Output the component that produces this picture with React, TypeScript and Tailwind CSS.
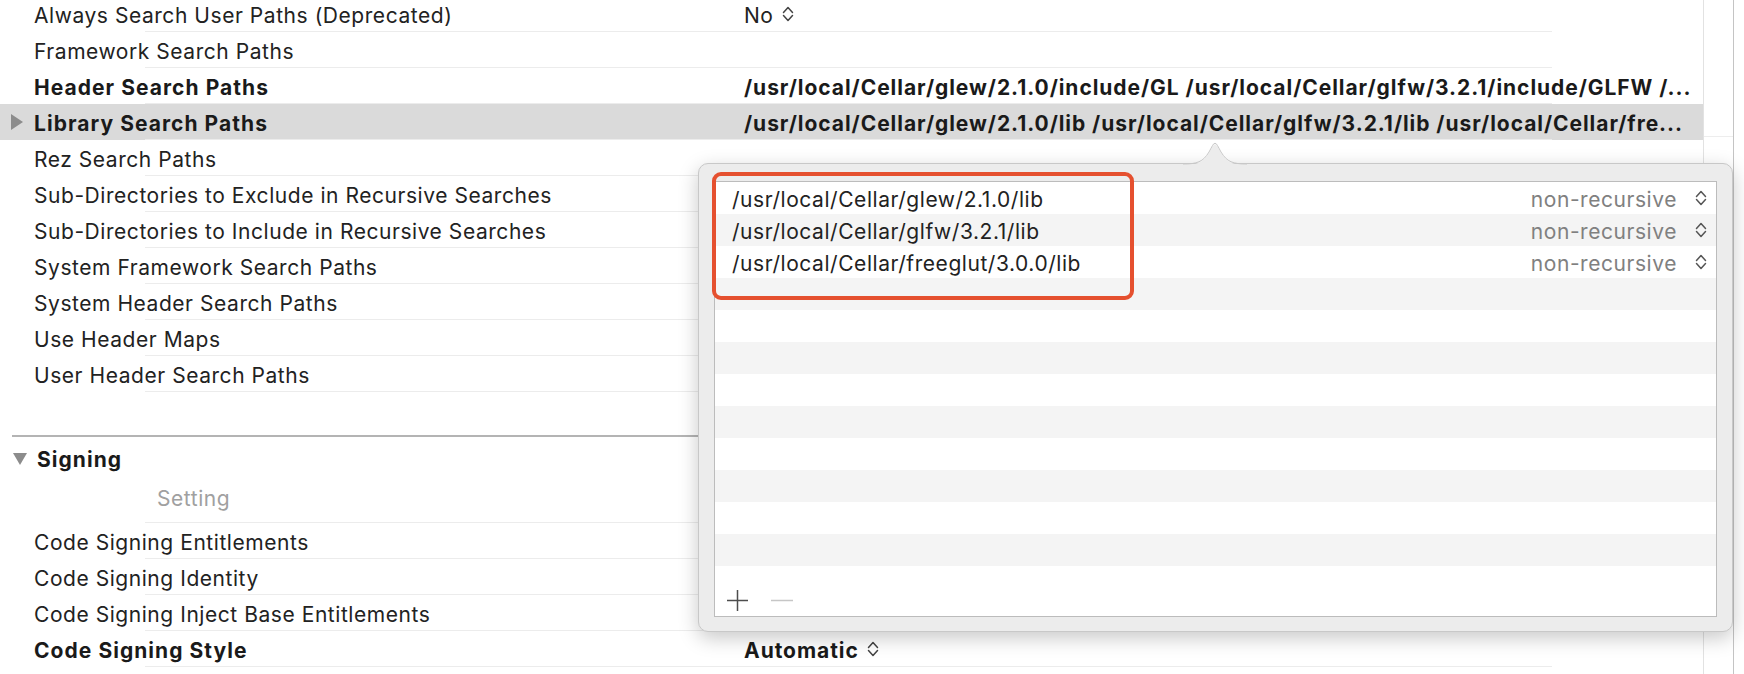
import React from 'react';

type Row = {
  label: string;
  value?: string;
  bold?: boolean;
  boldValue?: boolean;
  chevron?: boolean;
  selected?: boolean;
};

const searchRows: Row[] = [
  { label: 'Always Search User Paths (Deprecated)', value: 'No', chevron: true },
  { label: 'Framework Search Paths' },
  {
    label: 'Header Search Paths',
    bold: true,
    boldValue: true,
    value: '/usr/local/Cellar/glew/2.1.0/include/GL /usr/local/Cellar/glfw/3.2.1/include/GLFW /...',
  },
  {
    label: 'Library Search Paths',
    bold: true,
    boldValue: true,
    selected: true,
    value: '/usr/local/Cellar/glew/2.1.0/lib /usr/local/Cellar/glfw/3.2.1/lib /usr/local/Cellar/fre...',
  },
  { label: 'Rez Search Paths' },
  { label: 'Sub-Directories to Exclude in Recursive Searches' },
  { label: 'Sub-Directories to Include in Recursive Searches' },
  { label: 'System Framework Search Paths' },
  { label: 'System Header Search Paths' },
  { label: 'Use Header Maps' },
  { label: 'User Header Search Paths' },
];

const signingRows: Row[] = [
  { label: 'Code Signing Entitlements' },
  { label: 'Code Signing Identity' },
  { label: 'Code Signing Inject Base Entitlements' },
  { label: 'Code Signing Style', bold: true, boldValue: true, value: 'Automatic', chevron: true },
];

const paths = [
  '/usr/local/Cellar/glew/2.1.0/lib',
  '/usr/local/Cellar/glfw/3.2.1/lib',
  '/usr/local/Cellar/freeglut/3.0.0/lib',
];

const UpDown: React.FC<{ className?: string }> = ({ className }) => (
  <svg viewBox="0 0 12 18" className={className} fill="none" stroke="currentColor" strokeWidth={1.5} strokeLinecap="round" strokeLinejoin="round">
    <path d="M1.5 7.5 6 2.5 10.5 7.5" />
    <path d="M1.5 10.5 6 15.5 10.5 10.5" />
  </svg>
);

const SettingRow: React.FC<{ row: Row }> = ({ row }) => (
  <div className={`flex flex-col ${row.selected ? 'bg-[#dadada]' : ''}`}>
    <div className="h-[35px] pt-[3px] flex items-center">
      <div className="w-[744px] shrink-0 flex items-center">
        <div className="w-[34px] pl-[11px] flex items-center">
          {row.selected && (
            <svg viewBox="0 0 12 16" className="w-[12px] h-[16px] -mt-[2px]">
              <polygon points="0,0 12,8 0,16" fill="#8c8c8c" />
            </svg>
          )}
        </div>
        <span className={row.bold ? 'font-bold tracking-[1.05px] text-[#1a1a1a]' : ''}>{row.label}</span>
      </div>
      {row.value && (
        <div className="flex items-center gap-[8px] whitespace-nowrap">
          <span className={row.boldValue ? 'font-bold tracking-[0.95px] text-[#1a1a1a]' : ''}>{row.value}</span>
          {row.chevron && <UpDown className="w-[12px] h-[18px] -mt-[2px] text-[#444]" />}
        </div>
      )}
    </div>
    <div className="ml-[145px] w-[1407px] h-px bg-[#ececec]" />
  </div>
);

const App: React.FC = () => {
  return (
    <div className="relative w-[1744px] h-[674px] overflow-hidden bg-white font-['Inter',sans-serif] text-[21px] tracking-[0.55px] leading-none text-[#222]">
      <div className="flex h-full">
        {/* Build settings table */}
        <div className="w-[1703px] shrink-0 -mt-[4px]">
          {searchRows.map((r) => (
            <SettingRow key={r.label} row={r} />
          ))}

          <div className="h-[43px]" />
          <div className="ml-[12px] h-[2px] bg-[#b4b4b4]" />

          <div className="h-[42px] pt-[2px] flex items-center pl-[13px]">
            <svg viewBox="0 0 14 12" className="w-[14px] h-[12px] mr-[10px]">
              <polygon points="0,0 14,0 7,12" fill="#8c8c8c" />
            </svg>
            <span className="font-bold tracking-[1.05px] text-[#1a1a1a]">Signing</span>
          </div>

          <div className="flex flex-col">
            <div className="h-[43px] pt-[9px] pl-[157px] text-[#a0a0a0]">Setting</div>
            <div className="ml-[145px] w-[1407px] h-px bg-[#ececec]" />
          </div>
          {signingRows.map((r) => (
            <SettingRow key={r.label} row={r} />
          ))}
        </div>

        {/* right gutter */}
        <div className="w-[30px] shrink-0 border-l border-[#e2e2e2] flex flex-col">
          <div className="h-[137px] border-b border-[#ededed]" />
          <div className="h-[171px] border-b border-[#ededed]" />
        </div>
        <div className="flex-1 border-l border-[#c4c4c4]" />
      </div>

      {/* Popover */}
      <div className="absolute left-[698px] top-[163px] w-[1035px] h-[469px] rounded-[10px] border border-[#c8c8c8] bg-[#ececec] shadow-[0_6px_20px_rgba(0,0,0,0.22)] flex flex-col pt-[17px] px-[15px] pb-[14px]">
        <svg viewBox="0 0 64 25" className="absolute left-[484px] top-[-24px] w-[64px] h-[25px] overflow-visible">
          <path d="M0 25 C14 25 20 23 26 13 L29.5 6.5 Q32 2 34.5 6.5 L38 13 C44 23 50 25 64 25 Z" fill="#ececec" />
          <path d="M0 24 C14 24 20 22 26 12 L29.5 5.5 Q32 1 34.5 5.5 L38 12 C44 22 50 24 64 24" fill="none" stroke="#c8c8c8" strokeWidth={1} />
        </svg>

        <div className="relative flex-1 bg-white border border-[#bcbcbc] flex flex-col">
          {Array.from({ length: 12 }).map((_, i) => {
            const p = paths[i];
            return (
              <div key={i} className={`h-[32px] shrink-0 flex items-center pl-[17px] pr-[9px] ${i % 2 === 1 ? 'bg-[#f4f4f4]' : 'bg-white'}`}>
                {p && (
                  <>
                    <span className="flex-1 pt-[2px]">{p}</span>
                    <span className="text-[#808080] pt-[2px]">non-recursive</span>
                    <UpDown className="ml-[18px] w-[12px] h-[18px] text-[#555]" />
                  </>
                )}
              </div>
            );
          })}
          <div className="flex-1 flex items-start pt-[23px] pl-[11px] gap-[21px]">
            <svg viewBox="0 0 23 23" className="w-[23px] h-[23px]" stroke="#4d4d4d" strokeWidth={1.5}>
              <path d="M11.5 1v21M1 11.5h21" />
            </svg>
            <svg viewBox="0 0 24 23" className="w-[24px] h-[23px]" stroke="#c6c6c6" strokeWidth={1.5}>
              <path d="M1 11.5h22" />
            </svg>
          </div>

          <div className="absolute left-[-3px] top-[-10px] w-[422px] h-[128px] rounded-[9px] border-[4px] border-[#e5502f]" />
        </div>
      </div>
    </div>
  );
};

export default App;
